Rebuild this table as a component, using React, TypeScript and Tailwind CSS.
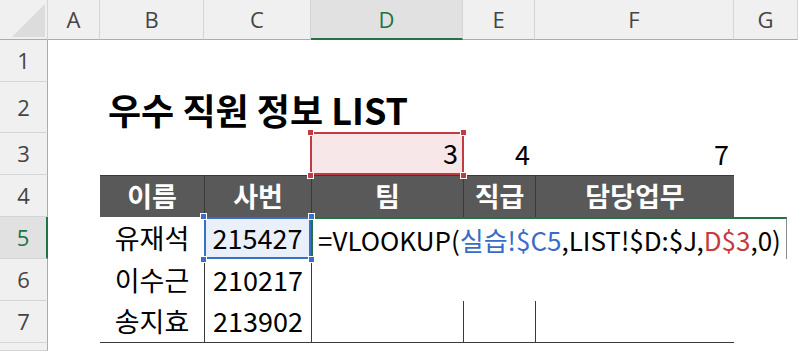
import React from 'react';

const cellFont = "font-['Noto_Sans_CJK_KR','Noto_Sans',sans-serif]";
const headFont = "font-['Open_Sans','Noto_Sans',sans-serif]";

const colLetters = ['A', 'B', 'C', 'D', 'E', 'F', 'G'];

const ColHead = ({ label, active }: { label: string; active?: boolean }) => (
  <div
    className={`flex items-center justify-center text-[22px] ${headFont} border-r border-r-[#d4d4d4] ${
      active
        ? 'bg-[#e1e1e1] text-[#217346] border-b-2 border-b-[#217346]'
        : 'bg-[#f0f0f0] text-[#444] border-b border-b-[#ababab]'
    }`}
  >
    {label}
  </div>
);

const RowHead = ({ n, active }: { n?: number; active?: boolean }) => (
  <div
    className={`flex items-center justify-center text-[22px] ${headFont} border-b border-b-[#d4d4d4] ${
      active
        ? 'bg-[#e1e1e1] text-[#217346] border-r-2 border-r-[#217346]'
        : 'bg-[#f0f0f0] text-[#444] border-r border-r-[#ababab]'
    }`}
  >
    {n}
  </div>
);

const Handle = ({ pos, color }: { pos: string; color: string }) => (
  <span className={`absolute w-[7px] h-[7px] border border-white z-20 ${color} ${pos}`} />
);

const Th = ({ children, first }: { children: React.ReactNode; first?: boolean }) => (
  <div
    className={`flex items-center justify-center bg-[#595959] text-white font-bold text-[27px] ${cellFont} border-t border-t-[#3a3a3a] ${
      first ? '' : 'border-l border-l-[#3a3a3a]'
    }`}
  >
    {children}
  </div>
);

const Td = ({ children, className = '' }: { children?: React.ReactNode; className?: string }) => (
  <div className={`flex items-center justify-center text-[27px] text-black ${cellFont} ${className}`}>{children}</div>
);

export default function App() {
  return (
    <div className="w-[798px] h-[351px] overflow-hidden bg-white">
      <div className="grid grid-cols-[48px_52px_104px_107px_152px_72px_199px_64px] grid-rows-[40px_42px_51px_42px_42px_42px_42px_42px_8px] h-[351px]">
        {/* column headers */}
        <div className="relative bg-[#f0f0f0] border-r border-r-[#d4d4d4] border-b border-b-[#ababab]">
          <svg className="absolute left-0 top-0" width="48" height="40">
            <polygon points="12,37 45,4 45,37" fill="#dcdcdc" />
          </svg>
        </div>
        {colLetters.map((c) => (
          <ColHead key={c} label={c} active={c === 'D'} />
        ))}

        {/* row 1 */}
        <RowHead n={1} />
        <div className="col-span-7" />

        {/* row 2 */}
        <RowHead n={2} />
        <div />
        <div className="col-span-6 flex items-end pl-[8px] pb-[6px]">
          <span className={`whitespace-nowrap text-[36px] font-bold text-black leading-none ${cellFont}`}>
            우수 직원 정보 LIST
          </span>
        </div>

        {/* row 3 */}
        <RowHead n={3} />
        <div />
        <div />
        <div />
        <div className="relative">
          <div className={`absolute -left-[1px] -top-[1px] w-[154px] h-[43px] bg-[#f8e7e8] border-2 border-[#c13b42] flex items-center justify-end pr-[4px] text-[27px] text-black ${cellFont}`}>
            3
          </div>
          <Handle pos="-left-[4px] -top-[4px]" color="bg-[#c13b42]" />
          <Handle pos="-right-[4px] -top-[4px]" color="bg-[#c13b42]" />
          <Handle pos="-left-[4px] -bottom-[4px]" color="bg-[#c13b42]" />
          <Handle pos="-right-[4px] -bottom-[4px]" color="bg-[#c13b42]" />
        </div>
        <Td className="justify-end pr-[5px]">4</Td>
        <Td className="justify-end pr-[5px]">7</Td>
        <div />

        {/* row 4 */}
        <RowHead n={4} />
        <div />
        <Th first>이름</Th>
        <Th>사번</Th>
        <Th>팀</Th>
        <Th>직급</Th>
        <Th>담당업무</Th>
        <div />

        {/* row 5 */}
        <RowHead n={5} active />
        <div />
        <Td>유재석</Td>
        <div className="relative">
          <div className={`absolute inset-0 bg-[#eaf0f9] border-2 border-[#3a6fc9] flex items-center justify-center text-[27px] text-black ${cellFont}`}>
            215427
          </div>
          <Handle pos="-left-[4px] -top-[4px]" color="bg-[#3a6fc9]" />
          <Handle pos="-right-[4px] -top-[4px]" color="bg-[#3a6fc9]" />
          <Handle pos="-left-[4px] -bottom-[4px]" color="bg-[#3a6fc9]" />
          <Handle pos="-right-[4px] -bottom-[4px]" color="bg-[#3a6fc9]" />
        </div>
        <div className="col-span-4 flex">
          <div
            className={`w-[476px] h-full bg-white border-l-2 border-t-2 border-[#217346] border-r border-r-[#8c8c8c] flex items-center pl-[5px] text-[26px] text-black whitespace-nowrap ${cellFont}`}
          >
            =VLOOKUP(<span className="text-[#3a6bc8]">실습!$C5</span>,LIST!$D:$J,<span className="text-[#c63b41]">D$3</span>,0)
          </div>
        </div>

        {/* row 6 */}
        <RowHead n={6} />
        <div />
        <Td>이수근</Td>
        <Td className="border-l border-l-[#3a3a3a]">210217</Td>
        <div className="border-l border-l-[#3a3a3a]" />
        <div />
        <div />
        <div />

        {/* row 7 */}
        <RowHead n={7} />
        <div />
        <Td className="border-b border-b-[#3a3a3a]">송지효</Td>
        <Td className="border-l border-l-[#3a3a3a] border-b border-b-[#3a3a3a]">213902</Td>
        <div className="border-l border-l-[#3a3a3a] border-b border-b-[#3a3a3a]" />
        <div className="border-l border-l-[#3a3a3a] border-b border-b-[#3a3a3a]" />
        <div className="border-l border-l-[#3a3a3a] border-b border-b-[#3a3a3a]" />
        <div />

        {/* row 8, cut off at the bottom */}
        <RowHead />
        <div className="col-span-7" />
      </div>
    </div>
  );
}
